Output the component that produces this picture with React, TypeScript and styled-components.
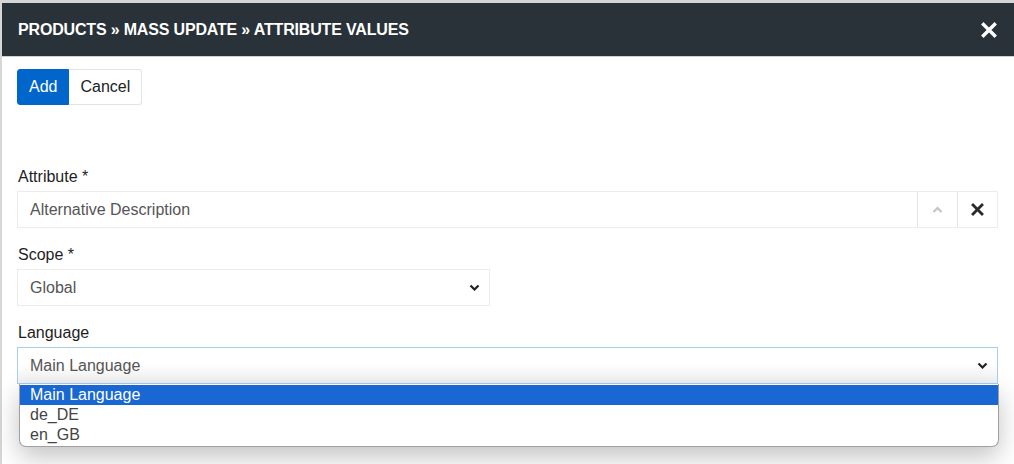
import React from 'react';
import styled, { createGlobalStyle } from 'styled-components';

const GlobalStyle = createGlobalStyle`
  html, body {
    margin: 0;
    padding: 0;
    background: #d6d6d6;
    font-family: "Liberation Sans", Arial, sans-serif;
    overflow: hidden;
  }
`;

const Page = styled.div`
  width: 1014px;
  height: 464px;
  padding: 3px 0 0 2px;
  box-sizing: border-box;
  background: #d6d6d6;
`;

const Modal = styled.div`
  background: #fff;
  height: 461px;
  display: flex;
  flex-direction: column;
`;

const Header = styled.div`
  height: 53px;
  background: #283238;
  border-bottom: 1px solid #d0d0d0;
  display: flex;
  align-items: center;
  justify-content: space-between;
  padding: 1px 16px 0 16px;
  box-sizing: border-box;
  height: 54px;
`;

const Title = styled.h1`
  margin: 0;
  color: #fff;
  font-size: 16px;
  font-weight: bold;
  letter-spacing: -0.17px;
`;

const CloseButton = styled.button`
  border: 0;
  background: none;
  padding: 0;
  width: 18px;
  height: 18px;
  display: flex;
  align-items: center;
  justify-content: center;
  cursor: pointer;
`;

const Body = styled.div`
  padding: 12px 16px 0 15px;
  display: flex;
  flex-direction: column;
`;

const ButtonGroup = styled.div`
  display: flex;
  margin-bottom: 62px;
`;

const Button = styled.button<{ $primary?: boolean }>`
  height: 36px;
  padding: 0 11px;
  font-family: "Liberation Sans", Arial, sans-serif;
  font-size: 16px;
  border: 1px solid ${(p) => (p.$primary ? '#0066cc' : '#e3e3e3')};
  background: ${(p) => (p.$primary ? '#0066cc' : '#fff')};
  color: ${(p) => (p.$primary ? '#fff' : '#222')};
  border-radius: ${(p) => (p.$primary ? '3px 0 0 3px' : '0 3px 3px 0')};
  ${(p) => (p.$primary ? '' : 'border-left: 0;')}
  cursor: pointer;
`;

const Group = styled.div`
  margin-bottom: 17px;
  position: relative;
`;

const Label = styled.label`
  display: block;
  font-size: 16px;
  line-height: 20px;
  color: #1e1e1e;
  margin: 0 0 4px 1px;
`;

const Field = styled.div<{ $width?: number; $focus?: boolean }>`
  width: ${(p) => (p.$width ? `${p.$width}px` : '981px')};
  height: 37px;
  box-sizing: border-box;
  border: 1px solid ${(p) => (p.$focus ? '#a9cdee' : '#ececec')};
  background: ${(p) => (p.$focus ? 'linear-gradient(#fff 40%, #f2f2f2)' : '#fff')};
  display: flex;
  align-items: stretch;
`;

const FieldText = styled.div`
  flex: 1;
  display: flex;
  align-items: center;
  padding-left: 12px;
  font-size: 16px;
  color: #555;
`;

const Addon = styled.div`
  width: 39px;
  border-left: 1px solid #e3e3e3;
  display: flex;
  align-items: center;
  justify-content: center;
`;

const Caret = styled.div`
  width: 30px;
  display: flex;
  align-items: center;
  justify-content: center;
`;

const Dropdown = styled.ul`
  position: absolute;
  left: 2px;
  top: 61px;
  width: 978px;
  margin: 0;
  padding: 1px 0 1px;
  list-style: none;
  background: #fff;
  border: 1px solid #a0a0a0;
  border-top: 0;
  border-radius: 0 0 7px 7px;
  box-shadow: 0 10px 26px rgba(0, 0, 0, 0.24);
  z-index: 2;
`;

const Option = styled.li<{ $active?: boolean }>`
  height: 20px;
  line-height: 20px;
  padding-left: 10px;
  font-size: 16px;
  background: ${(p) => (p.$active ? '#1967d2' : 'transparent')};
  color: ${(p) => (p.$active ? '#fff' : '#444')};
`;

const Chevron: React.FC<{ up?: boolean; color?: string }> = ({ up, color = '#222' }) => (
  <svg width="11" height="7" viewBox="0 0 11 7">
    <path
      d={up ? 'M1.5 6 L5.5 2 L9.5 6' : 'M1.5 1.5 L5.5 5.5 L9.5 1.5'}
      fill="none"
      stroke={color}
      strokeWidth="2.2"
    />
  </svg>
);

const Cross: React.FC<{ size: number; color: string }> = ({ size, color }) => (
  <svg width={size} height={size} viewBox="0 0 16 16">
    <path d="M2.5 2.5 L13.5 13.5 M13.5 2.5 L2.5 13.5" stroke={color} strokeWidth="3.4" strokeLinecap="square" />
  </svg>
);

const languages = ['Main Language', 'de_DE', 'en_GB'];

const App: React.FC = () => (
  <>
    <GlobalStyle />
    <Page>
      <Modal>
        <Header>
          <Title>PRODUCTS » MASS UPDATE » ATTRIBUTE VALUES</Title>
          <CloseButton>
            <Cross size={16} color="#fff" />
          </CloseButton>
        </Header>
        <Body>
          <ButtonGroup>
            <Button $primary>Add</Button>
            <Button>Cancel</Button>
          </ButtonGroup>
          <Group>
            <Label>Attribute *</Label>
            <Field>
              <FieldText>Alternative Description</FieldText>
              <Addon>
                <Chevron up color="#c4c4c4" />
              </Addon>
              <Addon>
                <Cross size={13} color="#2a2a2a" />
              </Addon>
            </Field>
          </Group>
          <Group>
            <Label>Scope *</Label>
            <Field $width={473}>
              <FieldText>Global</FieldText>
              <Caret>
                <Chevron />
              </Caret>
            </Field>
          </Group>
          <Group>
            <Label>Language</Label>
            <Field $focus>
              <FieldText>Main Language</FieldText>
              <Caret>
                <Chevron />
              </Caret>
            </Field>
            <Dropdown>
              {languages.map((lang, i) => (
                <Option key={lang} $active={i === 0}>
                  {lang}
                </Option>
              ))}
            </Dropdown>
          </Group>
        </Body>
      </Modal>
    </Page>
  </>
);

export default App;
